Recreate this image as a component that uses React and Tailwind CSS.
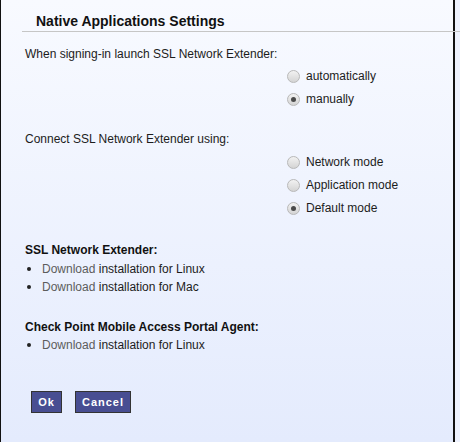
import React from "react";

const FONT = { fontFamily: '"Liberation Sans", Arial, sans-serif' };

function Radio({ checked, label }) {
  return (
    <div className="flex items-center h-[18px] ml-[262px]">
      <span className="w-[13px] h-[13px] rounded-full border border-[#b8b8b8] bg-gradient-to-b from-[#f2f2f2] to-[#d4d4d4] flex items-center justify-center shrink-0">
        {checked && <span className="w-[5px] h-[5px] rounded-full bg-[#4a4a4a]" />}
      </span>
      <span className="ml-[6px]">{label}</span>
    </div>
  );
}

function Item({ os }) {
  return (
    <div className="flex items-center h-[18px]">
      <span className="w-[17px] flex">
        <span className="ml-[2px] w-[4px] h-[4px] rounded-full bg-[#222]" />
      </span>
      <span>
        <span className="text-[#5c5c5c]">Download</span> installation for {os}
      </span>
    </div>
  );
}

export default function App() {
  return (
    <div className="w-[460px] h-[442px] bg-[#eef2fe]" style={FONT}>
      <div className="w-[455px] h-[442px] border-l border-r-2 border-[#111] bg-gradient-to-b from-[#f8faff] to-[#e4ebfd] text-[12px] leading-[18px] text-[#1c1c1c]">
        <div className="pt-[12px] pl-[35px] h-[18px] box-content text-[14px] leading-[18px] font-bold text-[#111]">
          Native Applications Settings
        </div>
        <div className="mt-px ml-[21px] mr-[-7px] h-px bg-[#c6c6c6]" />
        <div className="pl-[24px]">
          <div className="mt-[13px]">When signing-in launch SSL Network Extender:</div>
          <div className="mt-[4px] flex flex-col gap-[5px]">
            <Radio label="automatically" />
            <Radio label="manually" checked />
          </div>
          <div className="mt-[22px]">Connect SSL Network Extender using:</div>
          <div className="mt-[5px] flex flex-col gap-[5px]">
            <Radio label="Network mode" />
            <Radio label="Application mode" />
            <Radio label="Default mode" checked />
          </div>
          <div className="mt-[24px] font-bold text-[#111]">SSL Network Extender:</div>
          <div className="mt-px">
            <Item os="Linux" />
            <Item os="Mac" />
          </div>
          <div className="mt-[22px] font-bold text-[#111]">Check Point Mobile Access Portal Agent:</div>
          <Item os="Linux" />
          <div className="mt-[37px] ml-[6px] flex gap-[13px]">
            <button className="w-[31px] h-[22px] bg-[#484e92] border border-[#333] text-white text-[11px] font-bold tracking-[1px]">
              Ok
            </button>
            <button className="w-[56px] h-[22px] bg-[#484e92] border border-[#333] text-white text-[11px] font-bold tracking-[1px]">
              Cancel
            </button>
          </div>
        </div>
      </div>
    </div>
  );
}
